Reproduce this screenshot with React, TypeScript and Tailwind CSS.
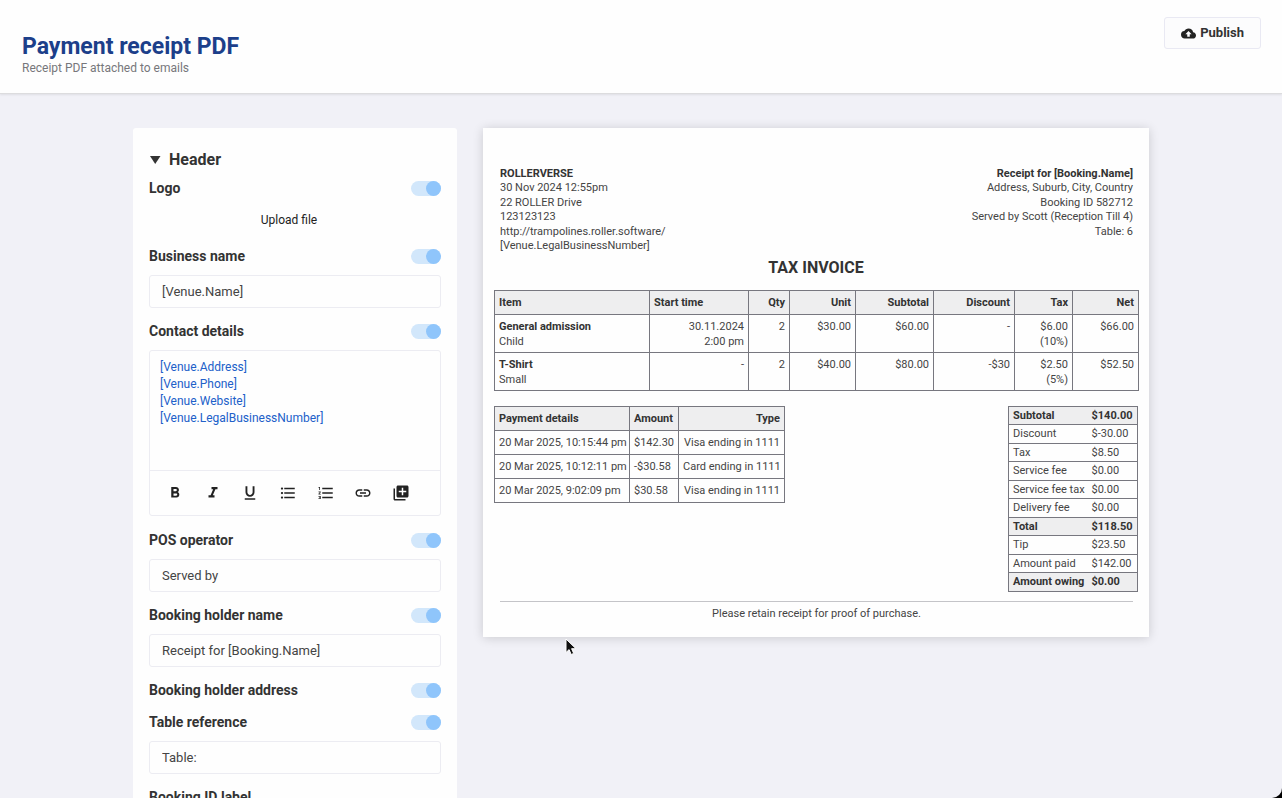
import React, { useState } from 'react';
import {
  MdCloudUpload,
  MdFormatBold,
  MdFormatItalic,
  MdFormatListBulleted,
  MdFormatListNumbered,
  MdFormatUnderlined,
  MdLibraryAdd,
  MdLink,
} from 'react-icons/md';

interface FieldProps {
  id: string;
  label: string;
  children?: React.ReactNode;
}

const Field: React.FC<FieldProps> = ({ id, label, children }) => {
  const [enabled, setEnabled] = useState(true);

  return (
    <div>
      <div className="flex items-center justify-between h-6">
        <label htmlFor={`${id}-toggle`} className="text-sm leading-6 font-bold">{label}</label>
        <input
          id={`${id}-toggle`}
          type="checkbox"
          role="switch"
          checked={enabled}
          onChange={(e) => setEnabled(e.target.checked)}
          className="flex appearance-none w-[30px] h-[15px] rounded-full bg-[#d2e7fb] cursor-pointer before:block before:size-[15px] before:rounded-full before:bg-[#8fc5fb] checked:justify-end"
        />
      </div>
      {children}
    </div>
  );
};

const TextInput: React.FC<{ label: string; value: string }> = ({ label, value }) => (
  <input
    type="text"
    aria-label={label}
    defaultValue={value}
    className="block w-full h-[33px] mt-[7px] mb-[3px] px-3 text-[13px] text-[#444] bg-[#fefefe] border border-[#ececf2] rounded-[3px] outline-none"
  />
);

const tools = [
  { name: 'Bold', Icon: MdFormatBold },
  { name: 'Italic', Icon: MdFormatItalic },
  { name: 'Underline', Icon: MdFormatUnderlined },
  { name: 'Bulleted list', Icon: MdFormatListBulleted },
  { name: 'Numbered list', Icon: MdFormatListNumbered },
  { name: 'Link', Icon: MdLink },
  { name: 'Insert field', Icon: MdLibraryAdd },
];

const contactDetails = '[Venue.Address]\n[Venue.Phone]\n[Venue.Website]\n[Venue.LegalBusinessNumber]';

const Sidebar = () => (
  <aside className="w-[324px] shrink-0 px-4 pt-5 bg-[#fefefe] rounded-t-[3px] text-[#333]">
    <button type="button" aria-expanded="true" className="flex items-center gap-2 h-6 mb-1 text-base font-bold">
      <svg viewBox="0 0 12 10" className="w-3 h-[10px]" fill="currentColor" aria-hidden="true">
        <path d="M1 1h10.500L6.200 9z" />
      </svg>
      Header
    </button>

    <div className="flex flex-col gap-2">
      <Field id="logo" label="Logo">
        <button type="button" className="block mx-auto mt-2 mb-1 pr-3 h-6 text-xs text-[#222]">Upload file</button>
      </Field>
      <Field id="business" label="Business name">
        <TextInput label="Business name" value="[Venue.Name]" />
      </Field>
      <Field id="contact" label="Contact details">
        <div className="mt-[7px] mb-1 border border-[#ececf2] rounded-[3px]">
          <textarea
            aria-label="Contact details"
            defaultValue={contactDetails}
            className="block w-full h-[119px] px-[10px] pt-2 text-xs leading-[17px] text-[#2160c9] resize-none outline-none"
          />
          <div className="flex items-center justify-between h-[45px] pl-4 pr-[30px] border-t border-[#ececf2] text-[#222]">
            {tools.map(({ name, Icon }) => (
              <button key={name} type="button" aria-label={name}>
                <Icon className="size-[18px]" />
              </button>
            ))}
          </div>
        </div>
      </Field>
      <Field id="operator" label="POS operator">
        <TextInput label="POS operator" value="Served by" />
      </Field>
      <Field id="holder-name" label="Booking holder name">
        <TextInput label="Booking holder name" value="Receipt for [Booking.Name]" />
      </Field>
      <Field id="holder-address" label="Booking holder address" />
      <Field id="table-ref" label="Table reference">
        <TextInput label="Table reference" value="Table:" />
      </Field>
      <p className="text-sm leading-6 font-bold">Booking ID label</p>
    </div>
  </aside>
);

const columns = [
  { name: 'Item', width: 'w-[155px]' },
  { name: 'Start time', width: 'w-[99px]' },
  { name: 'Qty', width: 'w-[41px]' },
  { name: 'Unit', width: 'w-[66px]' },
  { name: 'Subtotal', width: 'w-[78px]' },
  { name: 'Discount', width: 'w-[81px]' },
  { name: 'Tax', width: 'w-[58px]' },
  { name: 'Net', width: 'w-[66px]' },
];

const items = [
  { name: 'General admission', variant: 'Child', values: ['30.11.2024\n2:00 pm', '2', '$30.00', '$60.00', '-', '$6.00\n(10%)', '$66.00'] },
  { name: 'T-Shirt', variant: 'Small', values: ['-', '2', '$40.00', '$80.00', '-$30', '$2.50\n(5%)', '$52.50'] },
];

const payments = [
  ['20 Mar 2025, 10:15:44 pm', '$142.30', 'Visa ending in 1111'],
  ['20 Mar 2025, 10:12:11 pm', '-$30.58', 'Card ending in 1111'],
  ['20 Mar 2025, 9:02:09 pm', '$30.58', 'Visa ending in 1111'],
];

const totals = [
  { label: 'Subtotal', value: '$140.00', strong: true },
  { label: 'Discount', value: '$-30.00' },
  { label: 'Tax', value: '$8.50' },
  { label: 'Service fee', value: '$0.00' },
  { label: 'Service fee tax', value: '$0.00' },
  { label: 'Delivery fee', value: '$0.00' },
  { label: 'Total', value: '$118.50', strong: true },
  { label: 'Tip', value: '$23.50' },
  { label: 'Amount paid', value: '$142.00' },
  { label: 'Amount owing', value: '$0.00', strong: true },
];

const Receipt = () => (
  <section className="flex-1 min-w-0 px-[11px] pt-[38px] pb-4 bg-[#fefefe] text-[11px] leading-[14px] text-[#444] shadow-[0_1px_10px_rgba(0,0,0,0.16)]">
    <div className="flex justify-between pl-[6px] pr-[5px]">
      <div>
        <p className="leading-[15px] font-bold text-[#333]">ROLLERVERSE</p>
        <p>30 Nov 2024 12:55pm</p>
        <p className="leading-[15px]">22 ROLLER Drive</p>
        <p>123123123</p>
        <p className="leading-[15px]">http://trampolines.roller.software/</p>
        <p>[Venue.LegalBusinessNumber]</p>
      </div>
      <div className="text-right">
        <p className="leading-[15px] font-bold text-[#333]">Receipt for [Booking.Name]</p>
        <p>Address, Suburb, City, Country</p>
        <p className="leading-[15px]">Booking ID 582712</p>
        <p>Served by Scott (Reception Till 4)</p>
        <p className="leading-[15px]">Table: 6</p>
      </div>
    </div>

    <h2 className="mt-[5px] mb-3 text-base leading-5 font-bold text-center text-[#333]">TAX INVOICE</h2>

    <table className="w-full table-fixed border-collapse text-right">
      <thead>
        <tr className="h-6 bg-[#eeeeef] text-[#333]">
          {columns.map(({ name, width }, i) => (
            <th key={name} className={`${width} ${i < 2 ? 'text-left' : 'text-right'} px-1 font-bold border border-[#77777f]`}>{name}</th>
          ))}
        </tr>
      </thead>
      <tbody>
        {items.map((item) => (
          <tr key={item.name} className="h-[38px] align-top leading-[15px]">
            <td className="px-1 pt-1 text-left border border-[#77777f]">
              <strong className="block text-[#333]">{item.name}</strong>
              {item.variant}
            </td>
            {item.values.map((value, i) => (
              <td key={i} className="px-1 pt-1 whitespace-pre-line border border-[#77777f]">{value}</td>
            ))}
          </tr>
        ))}
      </tbody>
    </table>

    <div className="flex items-start justify-between mt-[15px]">
      <table className="w-[290px] table-fixed border-collapse whitespace-nowrap">
        <thead>
          <tr className="h-6 bg-[#eeeeef] text-left text-[#333]">
            <th className="w-[135px] px-1 font-bold border border-[#77777f]">Payment details</th>
            <th className="w-[49px] px-1 font-bold border border-[#77777f]">Amount</th>
            <th className="w-[106px] px-1 text-right font-bold border border-[#77777f]">Type</th>
          </tr>
        </thead>
        <tbody>
          {payments.map(([date, amount, type]) => (
            <tr key={date} className="h-6">
              <td className="px-1 border border-[#77777f]">{date}</td>
              <td className="px-1 border border-[#77777f]">{amount}</td>
              <td className="px-1 text-right border border-[#77777f]">{type}</td>
            </tr>
          ))}
        </tbody>
      </table>

      <table className="w-[130px] border-collapse border border-[#77777f] whitespace-nowrap">
        <tbody>
          {totals.map(({ label, value, strong }) => (
            <tr
              key={label}
              className={`odd:h-[18px] even:h-[19px] border-y border-[#77777f] ${strong ? 'bg-[#eeeeef] font-bold text-[#333]' : ''}`}
            >
              <td className="w-[79px] pl-1">{label}</td>
              <td className="pl-1">{value}</td>
            </tr>
          ))}
        </tbody>
      </table>
    </div>

    <p className="mt-[9px] ml-[6px] mr-[5px] pt-[5px] border-t border-[#c4c4c8] text-center">Please retain receipt for proof of purchase.</p>
  </section>
);

const Cursor = () => (
  <svg viewBox="0 0 12 18" className="absolute left-[565px] top-[638px] w-3 h-[18px]" aria-hidden="true">
    <path d="M1 1v13.500l3.100-2.900 2.100 4.900 2.500-1.100-2.100-4.700h4.400z" fill="#111" stroke="#fff" strokeWidth="1" />
  </svg>
);

const App = () => (
  <div className="h-screen bg-black">
    <div className="relative flex flex-col h-full overflow-hidden rounded-br-[10px] bg-[#f1f1f7] font-[Roboto,'Liberation_Sans',sans-serif]">
      <header className="flex items-start justify-between shrink-0 pl-[22px] pr-[21px] pt-[17px] pb-[17px] bg-[#fefefe] border-b border-[#dcdcde] shadow-[0_1px_2px_rgba(0,0,0,0.08)]">
        <div className="pt-4">
          <h1 className="text-[23px] leading-[27px] font-bold text-[#1c3f8a]">Payment receipt PDF</h1>
          <p className="text-xs leading-4 text-[#77777b]">Receipt PDF attached to emails</p>
        </div>
        <button
          type="button"
          className="flex items-center gap-1 h-8 px-4 bg-[#fcfcfd] border border-[#e9e9f3] rounded-[3px] text-[13px] font-bold text-[#333]"
        >
          <MdCloudUpload className="size-[15px] text-[#222]" />
          Publish
        </button>
      </header>

      <main className="flex items-start gap-[26px] w-full max-w-[1016px] mx-auto pt-[34px]">
        <Sidebar />
        <Receipt />
      </main>
      <Cursor />
    </div>
  </div>
);

export default App;
